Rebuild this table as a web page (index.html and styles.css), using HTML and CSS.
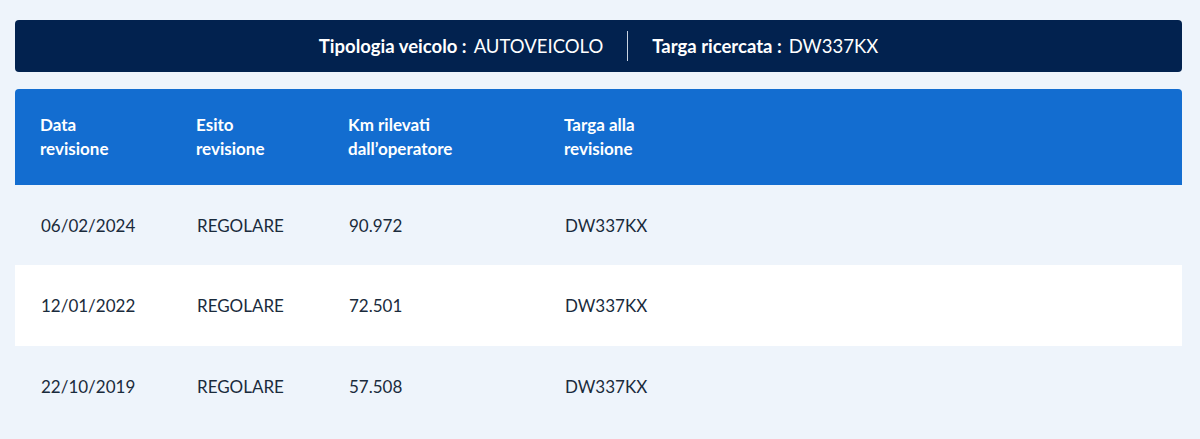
FILE: index.html
```html
<!DOCTYPE html>
<html lang="it">
<head>
<meta charset="utf-8">
<title>Revisioni</title>
<link rel="stylesheet" href="styles.css">
</head>
<body>
<main class="page">
  <div class="summary">
    <div class="summary-item"><span class="label">Tipologia veicolo :</span><span class="value">AUTOVEICOLO</span></div>
    <div class="divider"></div>
    <div class="summary-item"><span class="label">Targa ricercata :</span><span class="value">DW337KX</span></div>
  </div>
  <div class="table">
    <div class="row head">
      <div class="cell">Data<br>revisione</div>
      <div class="cell">Esito<br>revisione</div>
      <div class="cell">Km rilevati<br>dall’operatore</div>
      <div class="cell">Targa alla<br>revisione</div>
    </div>
    <div class="row">
      <div class="cell">06/02/2024</div>
      <div class="cell">REGOLARE</div>
      <div class="cell">90.972</div>
      <div class="cell">DW337KX</div>
    </div>
    <div class="row alt">
      <div class="cell">12/01/2022</div>
      <div class="cell">REGOLARE</div>
      <div class="cell">72.501</div>
      <div class="cell">DW337KX</div>
    </div>
    <div class="row">
      <div class="cell">22/10/2019</div>
      <div class="cell">REGOLARE</div>
      <div class="cell">57.508</div>
      <div class="cell">DW337KX</div>
    </div>
  </div>
</main>
</body>
</html>
```

FILE: styles.css
```css
html, body {
  margin: 0;
  background: #eef4fb;
}
body {
  font-family: "Lato", "Open Sans", sans-serif;
  color: #1a2b3c;
}
.page {
  padding: 20px 18px 0 15px;
}
.summary {
  height: 52px;
  background: #02224f;
  border-radius: 4px;
  display: flex;
  align-items: center;
  justify-content: center;
  gap: 24px;
  color: #fff;
  font-size: 18.5px;
}
.summary-item {
  display: flex;
  gap: 7px;
}
.label {
  font-weight: 700;
}
.value {
  font-weight: 400;
}
.divider {
  width: 1px;
  height: 30px;
  background: #c9d3e0;
}
.table {
  margin-top: 17px;
}
.row {
  display: grid;
  grid-template-columns: 156px 152px 216px 1fr;
  height: 80px;
  align-items: center;
  font-size: 17px;
}
.row.alt {
  background: #fff;
  height: 81px;
}
.row.head {
  height: 96px;
  background: #136dd0;
  color: #fff;
  font-weight: 700;
  line-height: 24px;
  border-radius: 4px 4px 0 0;
}
.cell {
  padding-left: 25px;
}
.row:not(.head) .cell {
  padding-left: 26px;
}
```
